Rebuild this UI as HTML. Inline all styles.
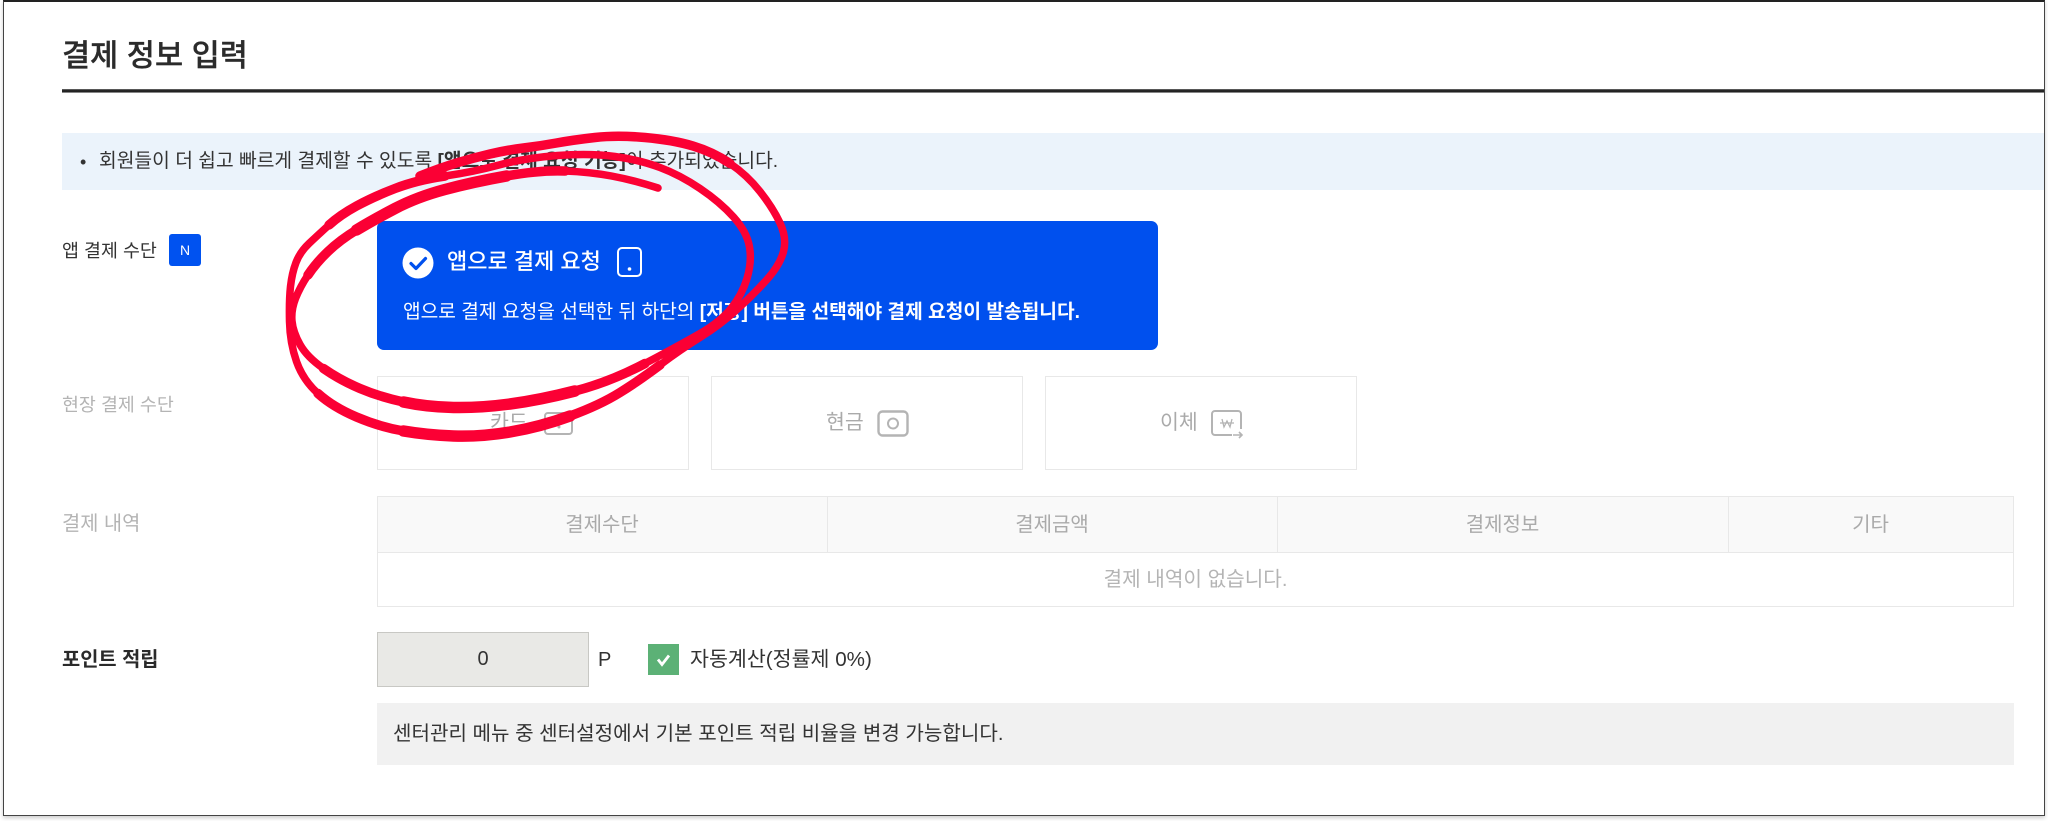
<!DOCTYPE html>
<html lang="ko">
<head>
<meta charset="utf-8">
<title>결제 정보 입력</title>
<style>
html,body{margin:0;padding:0;background:#fff;}
body{width:2048px;height:821px;position:relative;overflow:hidden;font-family:"Liberation Sans","Noto Sans CJK KR",sans-serif;color:#333;}
.a{position:absolute;white-space:nowrap;}
.frame{position:absolute;left:3px;top:0;width:2040px;height:813px;border:1px solid #444;border-top:2px solid #222;box-shadow:0 2px 4px rgba(0,0,0,.2);background:#fff;}
.t{line-height:30px;height:30px;}
.lab{left:62px;}
.g{color:#b4b4b4;}
.box{position:absolute;box-sizing:border-box;border:1px solid #e8e8e8;top:376px;height:94px;background:#fff;}
.c{text-align:center;}
</style>
</head>
<body>
<div class="frame"></div>

<div class="a" style="left:62px;top:35px;font-size:30.6px;line-height:42px;font-weight:500;color:#2b2b2b;-webkit-text-stroke:.3px #2b2b2b;">결제 정보 입력</div>
<div class="a" style="left:62px;top:89px;width:1982px;height:4px;background:linear-gradient(#777,#222 35%,#222 70%,#ccc);"></div>

<div class="a" style="left:62px;top:133px;width:1982px;height:57px;background:#ebf3fb;"></div>
<div class="a t" style="left:80px;top:147px;font-size:18px;color:#333;">•</div>
<div class="a t" style="left:99px;top:147px;font-size:19.25px;color:#333;">회원들이 더 쉽고 빠르게 결제할 수 있도록 <b>[앱으로 결제 요청 기능]</b>이 추가되었습니다.</div>

<div class="a t lab" style="top:236px;font-size:18.4px;color:#333;">앱 결제 수단</div>
<div class="a c" style="left:169px;top:234px;width:32px;height:32px;line-height:32px;border-radius:3px;background:#0052f0;color:#fff;font-size:14px;">N</div>

<div class="a" style="left:377px;top:221px;width:781px;height:129px;background:#0050ee;border-radius:7px;"></div>
<svg class="a" style="left:402px;top:247px" width="32" height="32" viewBox="0 0 32 32"><circle cx="16" cy="16" r="15.5" fill="#fff"/><path d="M9 16.5l5 5 9.5-10" fill="none" stroke="#0050ee" stroke-width="3.2" stroke-linecap="round" stroke-linejoin="round"/></svg>
<div class="a" style="left:447px;top:246px;font-size:22px;line-height:32px;color:#fff;font-weight:500;">앱으로 결제 요청</div>
<svg class="a" style="left:616px;top:246px" width="27" height="32" viewBox="0 0 27 32"><rect x="2" y="2" width="23" height="28" rx="4" fill="none" stroke="#fff" stroke-width="2"/><circle cx="13.5" cy="23" r="1.8" fill="#fff"/></svg>
<div class="a t" style="left:403px;top:298px;font-size:19.2px;color:#fff;">앱으로 결제 요청을 선택한 뒤 하단의 <b>[저장] 버튼을 선택해야 결제 요청이 발송됩니다.</b></div>

<div class="a t lab g" style="top:390px;font-size:18.4px;">현장 결제 수단</div>
<div class="box" style="left:377px;width:312px;"></div>
<div class="box" style="left:711px;width:312px;"></div>
<div class="box" style="left:1045px;width:312px;"></div>

<div class="a t" style="left:490px;top:408px;font-size:20.5px;color:#aaa;">카드</div>
<svg class="a" style="left:543px;top:411px" width="31" height="25" viewBox="0 0 31 25"><rect x="2" y="2" width="27" height="21" rx="3" fill="none" stroke="#b4b4b4" stroke-width="2"/><path d="M2 8h27" stroke="#b4b4b4" stroke-width="2"/><circle cx="16" cy="16" r="1.5" fill="#b4b4b4"/></svg>
<div class="a t" style="left:826px;top:408px;font-size:20.5px;color:#aaa;">현금</div>
<svg class="a" style="left:877px;top:410px" width="32" height="27" viewBox="0 0 32 27"><rect x="1.5" y="1.5" width="29" height="24" rx="4" fill="none" stroke="#b4b4b4" stroke-width="2.4"/><circle cx="16" cy="13.5" r="5" fill="none" stroke="#b4b4b4" stroke-width="2"/></svg>
<div class="a t" style="left:1160px;top:408px;font-size:20.5px;color:#aaa;">이체</div>
<svg class="a" style="left:1211px;top:410px" width="33" height="30" viewBox="0 0 33 30"><path d="M30 19V4a3 3 0 0 0-3-3H4a3 3 0 0 0-3 3v18a3 3 0 0 0 3 3h17" fill="none" stroke="#b4b4b4" stroke-width="2"/><path d="M22 25h9M28 22l3 3-3 3" fill="none" stroke="#b4b4b4" stroke-width="1.6"/><path d="M11 9l2 8 3-6 3 6 2-8M9 13h14" fill="none" stroke="#b4b4b4" stroke-width="1.3"/></svg>

<div class="a t lab g" style="top:509px;font-size:19.8px;">결제 내역</div>
<div class="a" style="left:377px;top:496px;width:1637px;height:111px;box-sizing:border-box;border:1px solid #e8e8e8;background:#fff;"></div>
<div class="a" style="left:378px;top:497px;width:1635px;height:55px;background:#f9f9f9;border-bottom:1px solid #e8e8e8;"></div>
<div class="a" style="left:827px;top:497px;width:1px;height:55px;background:#e8e8e8;"></div>
<div class="a" style="left:1277px;top:497px;width:1px;height:55px;background:#e8e8e8;"></div>
<div class="a" style="left:1728px;top:497px;width:1px;height:55px;background:#e8e8e8;"></div>
<div class="a t c" style="left:378px;top:510px;width:448px;font-size:20px;color:#aaa;">결제수단</div>
<div class="a t c" style="left:828px;top:510px;width:448px;font-size:20px;color:#aaa;">결제금액</div>
<div class="a t c" style="left:1278px;top:510px;width:449px;font-size:20px;color:#aaa;">결제정보</div>
<div class="a t c" style="left:1729px;top:510px;width:283px;font-size:20px;color:#aaa;">기타</div>
<div class="a t c" style="left:378px;top:565px;width:1635px;font-size:20.2px;color:#b4b4b4;">결제 내역이 없습니다.</div>

<div class="a t lab" style="top:645px;font-size:19.8px;font-weight:700;color:#2a2a2a;">포인트 적립</div>
<div class="a c" style="left:377px;top:632px;width:212px;height:55px;box-sizing:border-box;border:1px solid #c8c8c4;background:#e9e9e6;font-size:20px;line-height:53px;color:#333;">0</div>
<div class="a t" style="left:598px;top:645px;font-size:20px;color:#333;">P</div>
<div class="a" style="left:648px;top:644px;width:31px;height:31px;background:#5cb176;"></div>
<svg class="a" style="left:648px;top:644px" width="31" height="31" viewBox="0 0 31 31"><path d="M10 15.5l4 5 7-9" fill="none" stroke="#fff" stroke-width="2.8"/></svg>
<div class="a t" style="left:690px;top:645px;font-size:20.6px;color:#333;">자동계산(정률제 0%)</div>
<div class="a" style="left:377px;top:703px;width:1637px;height:62px;background:#f1f1f1;"></div>
<div class="a t" style="left:393px;top:719px;font-size:20.1px;color:#333;">센터관리 메뉴 중 센터설정에서 기본 포인트 적립 비율을 변경 가능합니다.</div>

<svg class="a" style="left:0;top:0" width="2048" height="821" viewBox="0 0 2048 821" fill="none" stroke="#fb0034" stroke-linecap="round" stroke-linejoin="round">
<path stroke-width="7.5" d="M658 188Q633 180 611.5 176Q590 172 565 171Q540 170 506.5 176Q473 182 445 189.5Q417 197 395 208.5Q373 220 356.5 230Q340 240 328 251.5Q316 263 308 275Q300 287 295.5 298.5Q291 310 292 321Q293 332 300 344.5Q307 357 323.5 368.5Q340 380 360 388.5Q380 397 403.5 402Q427 407 453.5 407.5Q480 408 510 404Q540 400 575 391Q610 382 645 363.5Q680 345 700 333.5Q720 322 731 308.5Q742 295 747 278.5Q752 262 749.5 247Q747 232 733.5 217Q720 202 700 188.5Q680 175 660 167.5Q640 160 615 156.5Q590 153 557.5 155.5Q525 158 499 165Q473 172 445 176Q417 180 395 188.5Q373 197 356.5 206Q340 215 329 225Q318 235 309 243.5Q300 252 296 262.5Q292 273 290.5 286.5Q289 300 289.5 321.5Q290 343 296.5 361.5Q303 380 318 393.5Q333 407 356.5 417Q380 427 403.5 431Q427 435 453.5 436Q480 437 510 432Q540 427 570 416Q600 405 620 392.5Q640 380 660 365Q680 350 700 337.5Q720 325 736.5 310Q753 295 766.5 280Q780 265 783.5 251.5Q787 238 780 223Q773 208 760 191.5Q747 175 730 163.5Q713 152 693 146Q673 140 645 137.5Q617 135 595 137.5Q573 140 556.5 143Q540 146 523.5 148Q507 150 490 154Q473 158 456.5 163Q440 168 420 176"/>
<path stroke-width="9.5" d="M565 171Q540 170 506.5 176Q473 182 445 189.5Q417 197 395 208.5Q373 220 356.5 230Q340 240 328 251.5Q316 263 308 275"/>
<path stroke-width="11.5" d="M506.5 176Q473 182 445 189.5Q417 197 395 208.5Q373 220 356.5 230"/>
<path stroke-width="9.5" d="M323.5 368.5Q340 380 360 388.5Q380 397 403.5 402Q427 407 453.5 407.5Q480 408 510 404Q540 400 575 391Q610 382 645 363.5"/>
<path stroke-width="11.5" d="M403.5 402Q427 407 453.5 407.5Q480 408 510 404Q540 400 575 391"/>
<path stroke-width="9.5" d="M445 176Q417 180 395 188.5Q373 197 356.5 206Q340 215 329 225"/>
<path stroke-width="9.5" d="M318 393.5Q333 407 356.5 417Q380 427 403.5 431Q427 435 453.5 436Q480 437 510 432Q540 427 570 416Q600 405 620 392.5Q640 380 660 365"/>
<path stroke-width="11.5" d="M403.5 431Q427 435 453.5 436Q480 437 510 432Q540 427 570 416"/>
<path stroke-width="9.5" d="M730 163.5Q713 152 693 146Q673 140 645 137.5Q617 135 595 137.5Q573 140 556.5 143Q540 146 523.5 148Q507 150 490 154Q473 158 456.5 163Q440 168 420 176"/>
</svg>
</body>
</html>
